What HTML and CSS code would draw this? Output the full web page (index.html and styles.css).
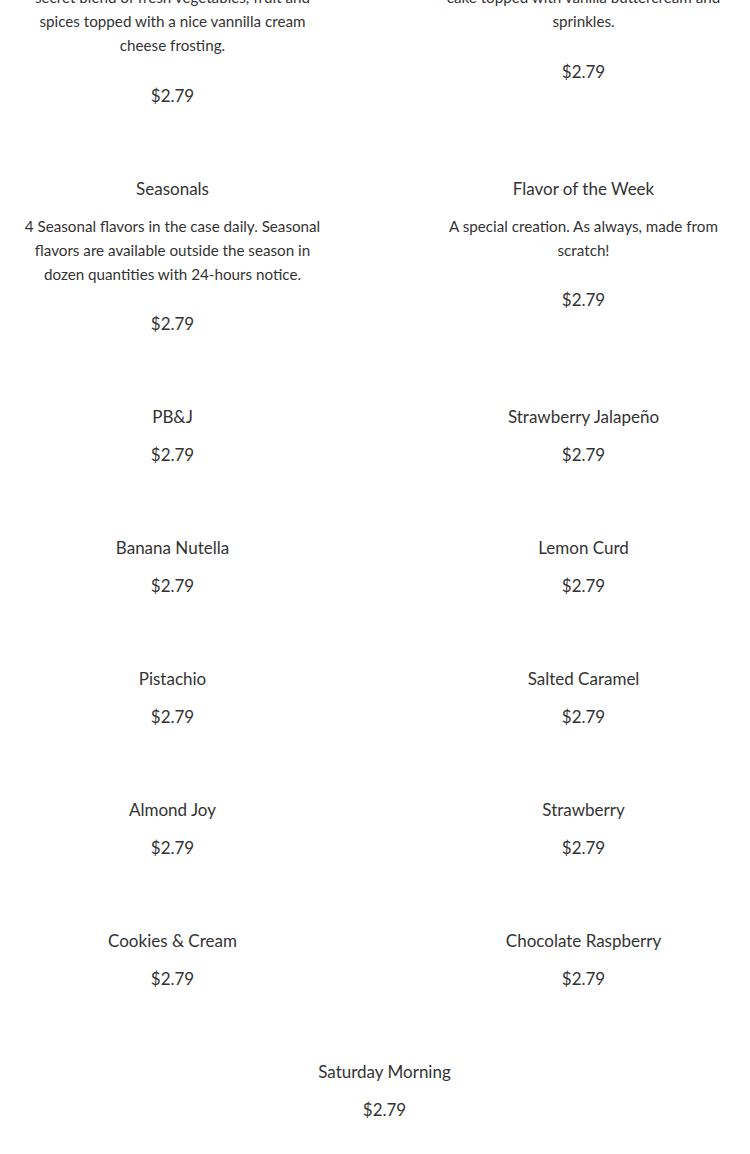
FILE: index.html
```html
<!DOCTYPE html>
<html lang="en">
<head>
<meta charset="utf-8">
<title>Menu</title>
<link rel="stylesheet" href="styles.css">
</head>
<body>
<main class="menu">
  <section class="item item--first">
    <p class="desc">Our signature carrot cake made with a<br>secret blend of fresh vegetables, fruit and spices topped with a nice vannilla cream cheese frosting.</p>
    <p class="price">$2.79</p>
  </section>
  <section class="item item--first">
    <p class="desc">Vanilla cake with sprinkles baked into the<br>cake topped with vanilla buttercream and sprinkles.</p>
    <p class="price">$2.79</p>
  </section>

  <section class="item">
    <h2 class="title">Seasonals</h2>
    <p class="desc">4 Seasonal flavors in the case daily. Seasonal flavors are available outside the season in dozen quantities with 24-hours notice.</p>
    <p class="price">$2.79</p>
  </section>
  <section class="item">
    <h2 class="title">Flavor of the Week</h2>
    <p class="desc">A special creation. As always, made from scratch!</p>
    <p class="price">$2.79</p>
  </section>

  <section class="item">
    <h2 class="title">PB&amp;J</h2>
    <p class="price">$2.79</p>
  </section>
  <section class="item">
    <h2 class="title">Strawberry Jalapeño</h2>
    <p class="price">$2.79</p>
  </section>

  <section class="item">
    <h2 class="title">Banana Nutella</h2>
    <p class="price">$2.79</p>
  </section>
  <section class="item">
    <h2 class="title">Lemon Curd</h2>
    <p class="price">$2.79</p>
  </section>

  <section class="item">
    <h2 class="title">Pistachio</h2>
    <p class="price">$2.79</p>
  </section>
  <section class="item">
    <h2 class="title">Salted Caramel</h2>
    <p class="price">$2.79</p>
  </section>

  <section class="item">
    <h2 class="title">Almond Joy</h2>
    <p class="price">$2.79</p>
  </section>
  <section class="item">
    <h2 class="title">Strawberry</h2>
    <p class="price">$2.79</p>
  </section>

  <section class="item">
    <h2 class="title">Cookies &amp; Cream</h2>
    <p class="price">$2.79</p>
  </section>
  <section class="item">
    <h2 class="title">Chocolate Raspberry</h2>
    <p class="price">$2.79</p>
  </section>

  <section class="item item--solo">
    <h2 class="title">Saturday Morning</h2>
    <p class="price">$2.79</p>
  </section>
</main>
</body>
</html>
```
FILE: styles.css
```css
html, body {
  margin: 0;
  padding: 0;
  background: #ffffff;
  overflow-x: hidden;
}

body {
  font-family: Lato, "Open Sans", "Liberation Sans", sans-serif;
  color: #333333;
}

.menu {
  display: grid;
  grid-template-columns: 345px 345px;
  align-items: start;
  column-gap: 66px;
  row-gap: 67px;
  margin-top: -39px;
  padding-bottom: 33px;
}

.item {
  display: flex;
  flex-direction: column;
  align-items: center;
  text-align: center;
  padding: 0 17px;
}

.item--solo {
  grid-column: 1 / -1;
  width: 345px;
  box-sizing: border-box;
  margin-left: 212px;
}

.title {
  margin: 0;
  padding-top: 1px;
  font-size: 17px;
  font-weight: 400;
  line-height: 24px;
}

.desc {
  margin: 13px 0 12px;
  font-size: 15.2px;
  line-height: 24px;
}

.item--first .desc {
  margin: 0 0 13px;
}

.price {
  margin: 13px 0 0;
  font-size: 17px;
  line-height: 26px;
}
```
